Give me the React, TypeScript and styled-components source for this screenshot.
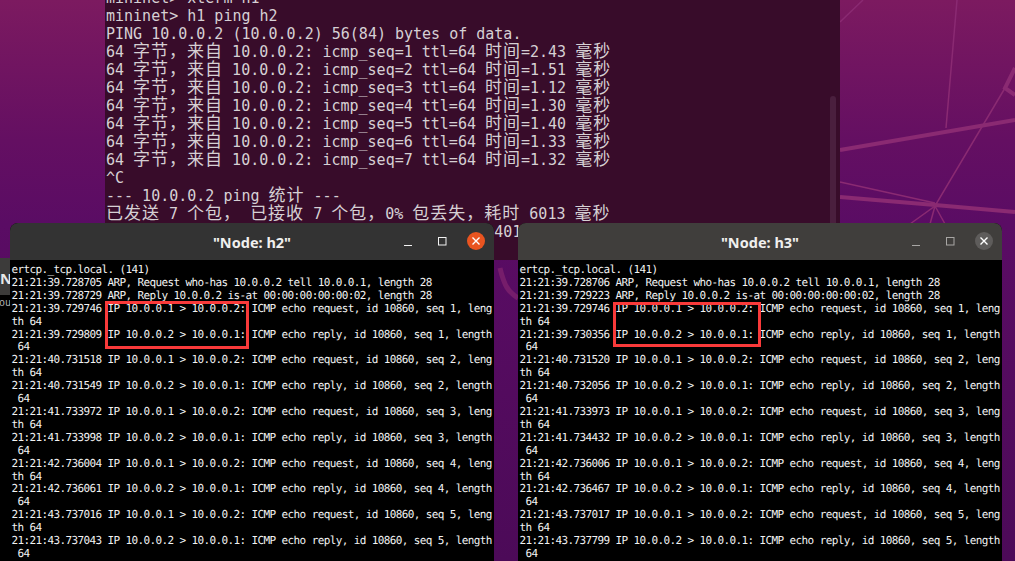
import React from "react";
import styled, { createGlobalStyle } from "styled-components";

const GlobalStyle = createGlobalStyle`
  html, body {
    margin: 0;
    padding: 0;
    width: 1015px;
    height: 561px;
    overflow: hidden;
    background: #2c0a33;
  }
`;

const Desktop = styled.div`
  position: relative;
  width: 1015px;
  height: 561px;
  overflow: hidden;
  background: linear-gradient(180deg, #7c1a60 0%, #640f62 25%, #5a0c64 40%, #4c0a58 100%);
`;

const Wallpaper = styled.svg`
  position: absolute;
  inset: 0;
`;

const MainTerminal = styled.div`
  position: absolute;
  left: 105px;
  top: -17px;
  width: 735px;
  height: 277px;
  padding: 6px 0 0 1px;
  box-sizing: border-box;
  background: #380c2a;
  color: #d6d0d4;
  font-family: "DejaVu Sans Mono", "Noto Sans CJK SC", monospace;
  font-size: 15px;
  line-height: 18px;
  white-space: pre;
`;

const Line = styled.div`
  height: 18px;
`;

// CJK cells are two columns wide in the terminal
const Cjk = styled.span`
  font-family: "Noto Sans CJK SC", sans-serif;
  font-size: 17px;
  letter-spacing: 1px;
  line-height: 0;
`;

const ScrollThumb = styled.div`
  position: absolute;
  right: 4px;
  top: 113px;
  bottom: 0;
  width: 6px;
  border-radius: 3px;
  background: #4a1f3e;
`;

const BackWindow = styled.div`
  position: absolute;
  left: 0;
  top: 258px;
  bottom: 0;
  width: 10px;
  display: flex;
  flex-direction: column;
  overflow: hidden;
  background: #000;
  white-space: nowrap;
`;

const BackTitle = styled.div`
  height: 37px;
  flex: none;
  background: #3c3b3a;
  color: #e8e8e8;
  font: bold 15px "Noto Sans", sans-serif;
  line-height: 41px;
`;

const BackText = styled.div`
  color: #b4b4b4;
  font: 10px "Liberation Mono", monospace;
  line-height: 13px;
  margin: 2px 0 0 -1px;
`;

const XTerm = styled.div<{ $left: number }>`
  position: absolute;
  left: ${(p) => p.$left}px;
  top: 223px;
  width: 484px;
  height: 338px;
  overflow: hidden;
  border-radius: 8px 8px 0 0;
  background: #000;
`;

const TitleBar = styled.div<{ $focused?: boolean }>`
  position: relative;
  height: 37px;
  display: flex;
  align-items: center;
  justify-content: center;
  background: ${(p) => (p.$focused ? "#333333" : "#403e3c")};
  color: #f0efee;
  font: bold 14.5px "Noto Sans", sans-serif;
  box-sizing: border-box;
`;

const Controls = styled.div`
  position: absolute;
  right: 9px;
  top: 9px;
  display: flex;
  align-items: center;
  gap: 20px;
`;

const Control = styled.svg`
  display: block;
`;

const MinControl = styled(Control)`
  margin-right: 4px;
`;

const CloseButton = styled.div<{ $focused?: boolean }>`
  width: 18px;
  height: 18px;
  border-radius: 50%;
  display: flex;
  align-items: center;
  justify-content: center;
  background: ${(p) => (p.$focused ? "#e95420" : "#5e5c5b")};
`;

const Screen = styled.div`
  position: relative;
  height: 301px;
  padding: 4px 0 0 1.5px;
  box-sizing: border-box;
  color: #f2f2f2;
  font-family: "DejaVu Sans Mono", monospace;
  font-size: 11px;
  letter-spacing: -0.62px;
  line-height: 12.9px;
  white-space: pre;
  text-rendering: geometricPrecision;
`;

const Highlight = styled.div<{ $top: number; $width: number; $height: number }>`
  position: absolute;
  left: 94.5px;
  top: ${(p) => p.$top}px;
  width: ${(p) => p.$width}px;
  height: ${(p) => p.$height}px;
  border: 3px solid #f93a3a;
  box-sizing: border-box;
`;

const pingLines = [
  ["2.43", 1],
  ["1.51", 2],
  ["1.12", 3],
  ["1.30", 4],
  ["1.40", 5],
  ["1.33", 6],
  ["1.32", 7],
] as const;

type Pair = { request: string; reply: string };

const packets = (arp1: string, arp2: string, pairs: Pair[]) => {
  const out = [
    "ertcp._tcp.local. (141)",
    `${arp1} ARP, Request who-has 10.0.0.2 tell 10.0.0.1, length 28`,
    `${arp2} ARP, Reply 10.0.0.2 is-at 00:00:00:00:00:02, length 28`,
  ];
  pairs.forEach((p, i) => {
    const seq = i + 1;
    out.push(`${p.request} IP 10.0.0.1 > 10.0.0.2: ICMP echo request, id 10860, seq ${seq}, leng`);
    out.push("th 64");
    out.push(`${p.reply} IP 10.0.0.2 > 10.0.0.1: ICMP echo reply, id 10860, seq ${seq}, length`);
    out.push(" 64");
  });
  return out;
};

const h2Lines = packets("21:21:39.728705", "21:21:39.728729", [
  { request: "21:21:39.729746", reply: "21:21:39.729809" },
  { request: "21:21:40.731518", reply: "21:21:40.731549" },
  { request: "21:21:41.733972", reply: "21:21:41.733998" },
  { request: "21:21:42.736004", reply: "21:21:42.736061" },
  { request: "21:21:43.737016", reply: "21:21:43.737043" },
]);

const h3Lines = packets("21:21:39.728706", "21:21:39.729223", [
  { request: "21:21:39.729746", reply: "21:21:39.730356" },
  { request: "21:21:40.731520", reply: "21:21:40.732056" },
  { request: "21:21:41.733973", reply: "21:21:41.734432" },
  { request: "21:21:42.736006", reply: "21:21:42.736467" },
  { request: "21:21:43.737017", reply: "21:21:43.737799" },
]);

function TermLine(props: { text: string }) {
  const parts = props.text.split(/([\u3000-\u9fff\uff00-\uffef]+)/);
  return (
    <Line>
      {parts.map((part, i) => (i % 2 === 1 ? <Cjk key={i}>{part}</Cjk> : part))}
    </Line>
  );
}

function NodeWindow(props: {
  left: number;
  title: string;
  lines: string[];
  focused?: boolean;
  box: { top: number; width: number; height: number };
}) {
  const stroke = props.focused ? "#f2f2f2" : "#a8a6a4";
  return (
    <XTerm $left={props.left}>
      <TitleBar $focused={props.focused}>
        {props.title}
        <Controls>
          <MinControl width="10" height="10" viewBox="0 0 10 10">
            <path d="M1 9.5h8" stroke={stroke} strokeWidth="1" />
          </MinControl>
          <Control width="10" height="10" viewBox="0 0 10 10">
            <rect x="1.5" y="1.5" width="7.5" height="7.5" fill="none" stroke={stroke} strokeWidth="1" />
          </Control>
          <CloseButton $focused={props.focused}>
            <svg width="10" height="10" viewBox="0 0 10 10">
              <path d="M1.5 1.5l7 7M8.5 1.5l-7 7" stroke="#fff" strokeWidth="1.4" />
            </svg>
          </CloseButton>
        </Controls>
      </TitleBar>
      <Screen>
        {props.lines.map((l, i) => (
          <div key={i}>{l}</div>
        ))}
        <Highlight $top={props.box.top} $width={props.box.width} $height={props.box.height} />
      </Screen>
    </XTerm>
  );
}

export default function App() {
  return (
    <Desktop>
      <GlobalStyle />
      <Wallpaper width="1015" height="561" viewBox="0 0 1015 561">
        <g fill="none" stroke="#8a2a72">
          <path d="M840 22L863 0" strokeWidth="1.5" />
          <path d="M957 0L946 128" strokeWidth="1.5" />
          <path d="M840 150L1015 120" strokeWidth="4" />
          <path d="M840 182L935 203" strokeWidth="1.5" />
          <path d="M840 197L935 205L1015 212" strokeWidth="4" />
          <path d="M1005 88L935 206L910 224" strokeWidth="1.5" />
          <path d="M935 206L945 224M935 206L930 224" strokeWidth="1.5" />
          <path d="M1015 68L1005 88L1015 95" strokeWidth="4" />
          <path d="M500 268C504 285 508 292 518 298" strokeWidth="5" strokeOpacity="0.6" />
        </g>
      </Wallpaper>
      <MainTerminal>
        <Line>mininet&gt; xterm h1</Line>
        <Line>mininet&gt; h1 ping h2</Line>
        <Line>PING 10.0.0.2 (10.0.0.2) 56(84) bytes of data.</Line>
        {pingLines.map(([ms, seq]) => (
          <TermLine key={seq} text={`64 字节，来自 10.0.0.2: icmp_seq=${seq} ttl=64 时间=${ms} 毫秒`} />
        ))}
        <Line>^C</Line>
        <TermLine text="--- 10.0.0.2 ping 统计 ---" />
        <TermLine text="已发送 7 个包， 已接收 7 个包，0% 包丢失，耗时 6013 毫秒" />
        <Line>rtt min/avg/max/mdev = 1.121/1.401/2.430/0.401 ms</Line>
        <ScrollThumb />
      </MainTerminal>
      <BackWindow>
        <BackTitle>Node</BackTitle>
        <BackText>our</BackText>
      </BackWindow>
      <NodeWindow left={10} title={'"Node: h2"'} lines={h2Lines} focused box={{ top: 40.5, width: 144, height: 48 }} />
      <NodeWindow left={518} title={'"Node: h3"'} lines={h3Lines} box={{ top: 42, width: 148, height: 45 }} />
    </Desktop>
  );
}
